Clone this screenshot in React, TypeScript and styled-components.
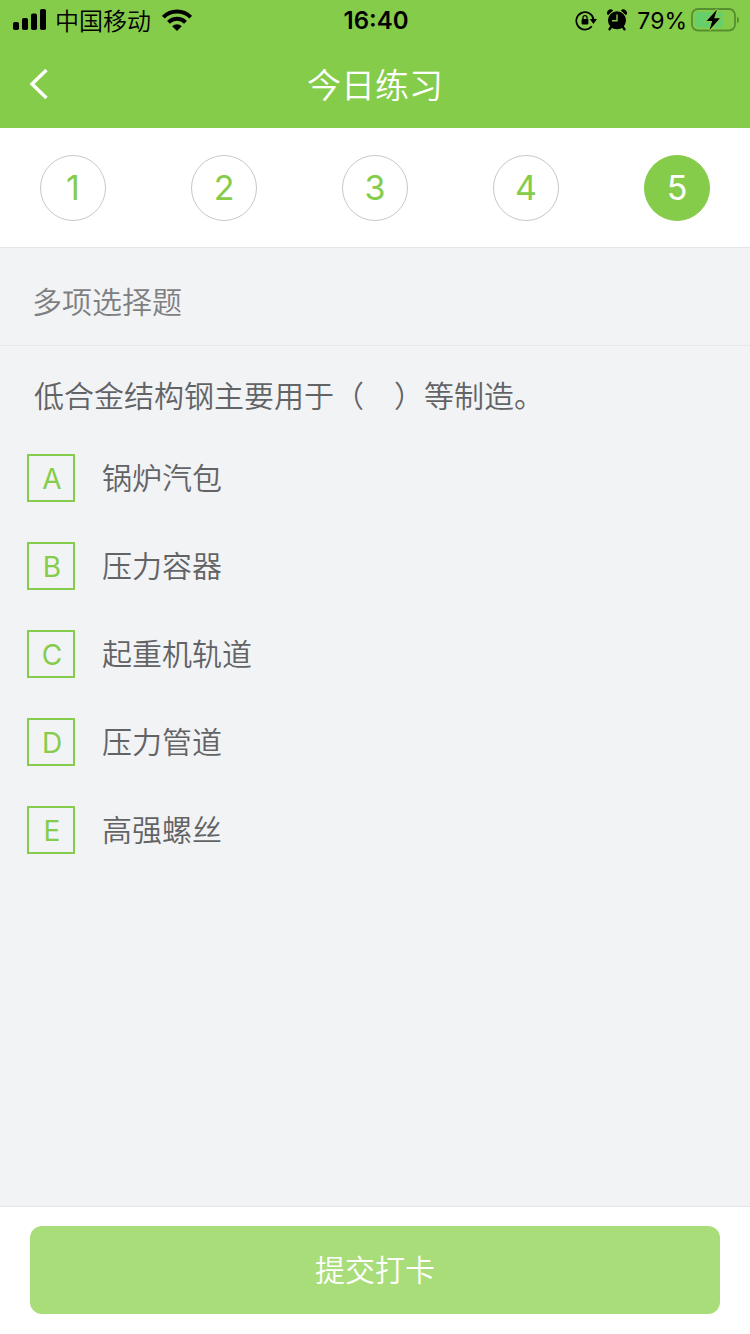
import React, { useState } from "react";
import styled, { createGlobalStyle } from "styled-components";

const green = "#86cc4b";

const GlobalStyle = createGlobalStyle`
  * { box-sizing: border-box; }
  body {
    margin: 0;
    background: #f2f3f5;
    font-family: Inter, "Noto Sans CJK SC", sans-serif;
    font-weight: 350;
  }
  button, input { font: inherit; margin: 0; }
`;

const Page = styled.div`
  display: flex;
  flex-direction: column;
  min-height: 100vh;
`;

const Top = styled.header`
  background: ${green};
`;

const StatusBar = styled.div`
  display: grid;
  grid-template-columns: 1fr auto 1fr;
  align-items: center;
  height: 40px;
  padding: 0 11px 0 13px;
  color: #000;
  font-size: 24px;
  line-height: 40px;
`;

const StatusGroup = styled.div<{ $end?: boolean }>`
  display: flex;
  align-items: center;
  justify-content: ${(p) => (p.$end ? "flex-end" : "flex-start")};
  gap: ${(p) => (p.$end ? 10 : 9)}px;
  svg { display: block; flex: none; }
`;

const Carrier = styled.span`
  margin-right: 2px;
  font-family: "Noto Sans CJK SC", sans-serif;
`;

const Charge = styled.span`
  display: flex;
  align-items: center;
  gap: 4px;
  font-size: 23px;
  font-weight: 400;
`;

const Percent = styled.span`
  padding-top: 2px;
  line-height: 38px;
`;

const Clock = styled.time`
  padding-top: 2px;
  font-weight: 600;
  line-height: 38px;
`;

const NavBar = styled.div`
  display: grid;
  grid-template-columns: 80px 1fr 80px;
  align-items: center;
  height: 88px;
`;

const BackButton = styled.button`
  display: flex;
  align-items: center;
  height: 88px;
  padding: 0 0 0 28px;
  border: 0;
  background: none;
`;

const Title = styled.h1`
  margin: 0;
  padding-top: 4px;
  color: #fff;
  font-size: 34px;
  font-weight: 350;
  line-height: 48px;
  text-align: center;
`;

const Steps = styled.nav`
  display: flex;
  justify-content: space-between;
  padding: 27px 40px 26px;
  background: #fff;
  border-bottom: 1px solid #e4e5e6;
`;

const Step = styled.button<{ $active: boolean }>`
  width: 66px;
  height: 66px;
  padding: 0;
  border: 1px solid ${(p) => (p.$active ? green : "#c8c8c8")};
  border-radius: 50%;
  background: ${(p) => (p.$active ? green : "#fff")};
  color: ${(p) => (p.$active ? "#fff" : green)};
  font-size: 34px;
  font-weight: 400;
  line-height: 64px;
`;

const Kind = styled.h2`
  margin: 0;
  padding: 33px 32px 22px;
  border-bottom: 1px solid #e6e8ea;
  color: #7e7f81;
  font-size: 30px;
  font-weight: 350;
  line-height: 42px;
`;

const Question = styled.fieldset`
  flex: 1;
  min-width: 0;
  margin: 0;
  padding: 29px 27px;
  border: 0;
  color: #626365;
  font-size: 30px;
  line-height: 42px;
`;

const Prompt = styled.legend`
  float: left;
  width: 100%;
  margin-bottom: 37px;
  padding: 0 7px;
`;

const Options = styled.div`
  clear: both;
  display: flex;
  flex-direction: column;
  align-items: flex-start;
  gap: 40px;
`;

const Option = styled.label`
  display: flex;
  align-items: center;
  gap: 27px;
  height: 48px;
`;

const Box = styled.span`
  display: grid;
  width: 48px;
  height: 48px;
  > * { grid-area: 1 / 1; }
`;

const Check = styled.input`
  appearance: none;
  width: 48px;
  height: 48px;
  border: 2px solid ${green};
  &:checked { background: ${green}; }
  &:checked + span { color: #fff; }
`;

const Letter = styled.span`
  z-index: 1;
  padding-left: 2px;
  color: ${green};
  font-size: 28px;
  font-weight: 400;
  line-height: 50px;
  text-align: center;
  pointer-events: none;
`;

const Footer = styled.footer`
  padding: 19px 30px 20px;
  border-top: 1px solid #e4e6e8;
  background: #fff;
`;

const Submit = styled.button`
  display: block;
  width: 100%;
  height: 88px;
  border: 0;
  border-radius: 12px;
  background: #a9dd7a;
  color: #fff;
  font-size: 30px;
  line-height: 44px;
`;

const SignalIcon = () => (
  <svg width="33" height="22" viewBox="0 0 33 22" aria-hidden="true">
    <rect x="0" y="13" width="6" height="8" rx="1.8" />
    <rect x="9" y="9" width="6" height="12" rx="1.8" />
    <rect x="18" y="4.500" width="6" height="16.500" rx="1.8" />
    <rect x="27" y="0" width="6" height="21" rx="1.8" />
  </svg>
);

const WifiIcon = () => (
  <svg width="30" height="22" viewBox="0 0 30 22" aria-hidden="true">
    <g fill="none" stroke="#000" strokeWidth="4">
      <path d="M1.300 8.200a19.500 19.500 0 0 1 27.400 0" />
      <path d="M6.500 13.400a12 12 0 0 1 17 0" />
    </g>
    <path d="M10.200 17.200a6.800 6.800 0 0 1 9.600 0L15 22z" />
  </svg>
);

const RotationLockIcon = () => (
  <svg width="22" height="22" viewBox="0 0 22 22" aria-hidden="true">
    <path d="M16.800 17.300A8.700 8.700 0 1 1 18.600 10.500" fill="none" stroke="#000" strokeWidth="1.700" />
    <path d="M14.800 10H22l-3.600 5z" />
    <rect x="6.600" y="10" width="6.800" height="5.400" rx="0.800" />
    <path d="M8 10.500V8.600a2 2 0 0 1 4 0v1.900" fill="none" stroke="#000" strokeWidth="1.300" />
  </svg>
);

const AlarmIcon = () => (
  <svg width="20" height="22" viewBox="0 0 20 22" aria-hidden="true">
    <circle cx="10" cy="11.300" r="9" />
    <path d="M1 6.200a3.400 3.400 0 0 1 5.200-4.600zM19 6.200a3.400 3.400 0 0 0-5.200-4.600z" />
    <path d="M4.500 17.500l-2 2.800M15.500 17.500l2 2.800" stroke="#000" strokeWidth="2.400" strokeLinecap="round" />
    <path d="M10 5.500v6.200H5" fill="none" stroke={green} strokeWidth="1.400" />
  </svg>
);

const BatteryIcon = () => (
  <svg width="48" height="24" viewBox="0 0 48 24" aria-hidden="true">
    <rect x="1" y="1" width="43" height="21.500" rx="6" fill="none" stroke="#558f30" strokeWidth="1.800" />
    <path d="M46 8.500a4 4 0 0 1 0 7z" fill="#558f30" />
    <rect x="4" y="4" width="28" height="15.500" rx="3" fill="#65cf6c" />
    <path d="M26 1.500L15.500 13h5.700L18.500 22 29 10.300h-5.800z" fill="#000" stroke={green} strokeWidth="2.400" paintOrder="stroke" />
  </svg>
);

const BackIcon = () => (
  <svg width="20" height="32" viewBox="0 0 20 32" fill="none" stroke="#fff" strokeWidth="3.400" aria-hidden="true">
    <path d="M18.500 2L4 16l14.500 14" />
  </svg>
);

const steps = [1, 2, 3, 4, 5];
const options = [
  ["A", "锅炉汽包"],
  ["B", "压力容器"],
  ["C", "起重机轨道"],
  ["D", "压力管道"],
  ["E", "高强螺丝"],
];

export default function App() {
  const [current, setCurrent] = useState(5);

  return (
    <Page lang="zh-CN">
      <GlobalStyle />
      <Top>
        <StatusBar>
          <StatusGroup>
            <SignalIcon />
            <Carrier>中国移动</Carrier>
            <WifiIcon />
          </StatusGroup>
          <Clock>16:40</Clock>
          <StatusGroup $end>
            <RotationLockIcon />
            <AlarmIcon />
            <Charge>
              <Percent>79%</Percent>
              <BatteryIcon />
            </Charge>
          </StatusGroup>
        </StatusBar>
        <NavBar>
          <BackButton type="button" aria-label="返回">
            <BackIcon />
          </BackButton>
          <Title>今日练习</Title>
        </NavBar>
      </Top>
      <Steps>
        {steps.map((n) => (
          <Step key={n} type="button" $active={n === current} onClick={() => setCurrent(n)}>
            {n}
          </Step>
        ))}
      </Steps>
      <Kind>多项选择题</Kind>
      <Question>
        <Prompt>低合金结构钢主要用于（　）等制造。</Prompt>
        <Options>
          {options.map(([letter, text]) => (
            <Option key={letter}>
              <Box>
                <Check type="checkbox" name="answer" value={letter} />
                <Letter>{letter}</Letter>
              </Box>
              {text}
            </Option>
          ))}
        </Options>
      </Question>
      <Footer>
        <Submit type="button">提交打卡</Submit>
      </Footer>
    </Page>
  );
}
